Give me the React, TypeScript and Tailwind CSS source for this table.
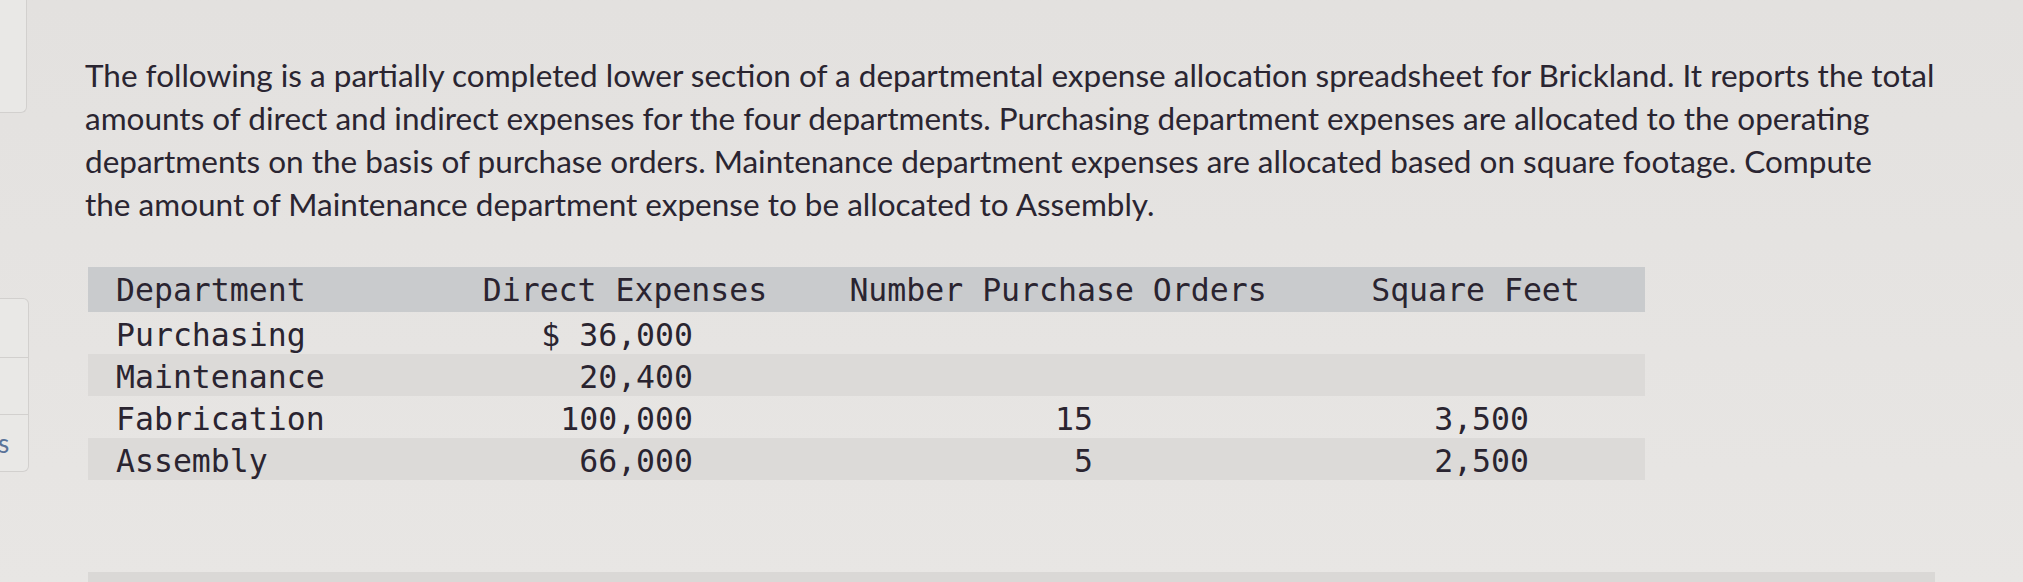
const rows = [
  { name: 'Purchasing', direct: '$ 36,000', orders: '', feet: '', shaded: false },
  { name: 'Maintenance', direct: '20,400', orders: '', feet: '', shaded: true },
  { name: 'Fabrication', direct: '100,000', orders: '15', feet: '3,500', shaded: false },
  { name: 'Assembly', direct: '66,000', orders: '5', feet: '2,500', shaded: true },
];

export default function App() {
  return (
    <div className="w-[2023px] h-[582px] overflow-hidden flex bg-gradient-to-b from-[#e3e1df] to-[#e8e6e4]">
      {/* Side panel, cut off at the left edge */}
      <aside className="w-[30px] shrink-0 flex flex-col">
        <div className="w-[27px] h-[113px] border-r border-b border-[#d2d0ce] rounded-br-md bg-[#e9e8e6]" />
        <div className="mt-[185px] w-[29px] h-[174px] flex flex-col border-r border-t border-b border-[#d2d0ce] rounded-r-md bg-[#e9e8e6]">
          <div className="h-[59px] border-b border-[#d2d0ce]" />
          <div className="h-[57px] border-b border-[#d2d0ce]" />
          <div className="flex-1 flex items-center">
            <span className="-ml-[2px] text-[26px] leading-none text-[#5a7399] font-['Lato',sans-serif]">s</span>
          </div>
        </div>
      </aside>

      <main className="flex-1 flex flex-col pl-[55px] pt-[54px]">
        <p className="text-[31.5px] leading-[43px] text-[#2a2531] font-['Lato',sans-serif] whitespace-nowrap">
          The following is a partially completed lower section of a departmental expense allocation spreadsheet for Brickland. It reports the total
          <br />
          amounts of direct and indirect expenses for the four departments. Purchasing department expenses are allocated to the operating
          <br />
          departments on the basis of purchase orders. Maintenance department expenses are allocated based on square footage. Compute
          <br />
          the amount of Maintenance department expense to be allocated to Assembly.
        </p>

        <div className="mt-[41px] ml-[3px] w-[1557px] font-['DejaVu_Sans_Mono',monospace] text-[31.5px] text-[#2a2430]">
          <div className="grid grid-cols-[352px_370px_496px_339px] h-[45px] items-center pb-[3px] bg-[#c9cbcd]">
            <div className="pl-[28px]">Department</div>
            <div className="text-center">Direct Expenses</div>
            <div className="text-center">Number Purchase Orders</div>
            <div className="text-center">Square Feet</div>
          </div>
          {rows.map((r) => (
            <div
              key={r.name}
              className={`grid grid-cols-[352px_370px_496px_339px] h-[42px] items-center ${r.shaded ? 'bg-[#dcdad8]' : ''}`}
            >
              <div className="pl-[28px]">{r.name}</div>
              <div className="text-right pr-[117px]">{r.direct}</div>
              <div className="text-right pr-[213px]">{r.orders}</div>
              <div className="text-right pr-[116px]">{r.feet}</div>
            </div>
          ))}
        </div>

        <div className="mt-auto ml-[3px] w-[1847px] h-[10px] bg-[#dad8d6]" />
      </main>
    </div>
  );
}
